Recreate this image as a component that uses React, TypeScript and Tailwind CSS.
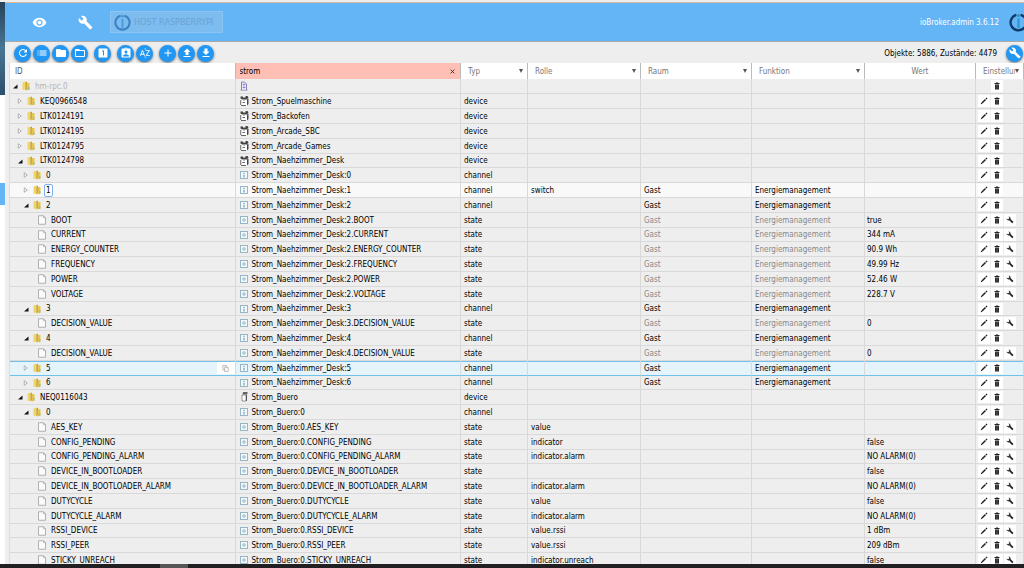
import type { ReactNode } from "react";
import {
  MdAdd,
  MdAssignmentInd,
  MdBuild,
  MdFileDownload,
  MdFileUpload,
  MdFolder,
  MdFolderOpen,
  MdList,
  MdLooksOne,
  MdRefresh,
  MdSortByAlpha,
  MdVisibility,
} from "react-icons/md";

type Kind = "instance" | "device" | "socket" | "channel" | "state";

type Row = {
  id: string;
  level: number;
  kind: Kind;
  name?: string;
  open?: boolean;
  role?: string;
  room?: string;
  func?: string;
  value?: string;
  focused?: boolean;
  selected?: boolean;
};

const desk = "Strom_Naehzimmer_Desk";
const buero = "Strom_Buero";

const channel = (id: string, name: string, extra: Partial<Row> = {}): Row => ({
  id,
  level: 2,
  kind: "channel",
  name: `${name}:${id}`,
  ...extra,
});

const state = (id: string, parent: string, extra: Partial<Row> = {}): Row => ({
  id,
  level: 3,
  kind: "state",
  name: `${parent}.${id}`,
  ...extra,
});

const energy = { room: "Gast", func: "Energiemanagement" };

const rows: Row[] = [
  { id: "hm-rpc.0", level: 0, kind: "instance", open: true },
  { id: "KEQ0966548", level: 1, kind: "device", name: "Strom_Spuelmaschine" },
  { id: "LTK0124191", level: 1, kind: "device", name: "Strom_Backofen" },
  { id: "LTK0124195", level: 1, kind: "device", name: "Strom_Arcade_SBC" },
  { id: "LTK0124795", level: 1, kind: "device", name: "Strom_Arcade_Games" },
  { id: "LTK0124798", level: 1, kind: "device", name: desk, open: true },
  channel("0", desk),
  channel("1", desk, { ...energy, role: "switch", focused: true }),
  channel("2", desk, { ...energy, open: true }),
  state("BOOT", `${desk}:2`, { ...energy, value: "true" }),
  state("CURRENT", `${desk}:2`, { ...energy, value: "344 mA" }),
  state("ENERGY_COUNTER", `${desk}:2`, { ...energy, value: "90.9 Wh" }),
  state("FREQUENCY", `${desk}:2`, { ...energy, value: "49.99 Hz" }),
  state("POWER", `${desk}:2`, { ...energy, value: "52.46 W" }),
  state("VOLTAGE", `${desk}:2`, { ...energy, value: "228.7 V" }),
  channel("3", desk, { ...energy, open: true }),
  state("DECISION_VALUE", `${desk}:3`, { ...energy, value: "0" }),
  channel("4", desk, { ...energy, open: true }),
  state("DECISION_VALUE", `${desk}:4`, { ...energy, value: "0" }),
  channel("5", desk, { ...energy, selected: true }),
  channel("6", desk, energy),
  { id: "NEQ0116043", level: 1, kind: "socket", name: buero, open: true },
  channel("0", buero, { open: true }),
  state("AES_KEY", `${buero}:0`, { role: "value" }),
  state("CONFIG_PENDING", `${buero}:0`, { role: "indicator", value: "false" }),
  state("CONFIG_PENDING_ALARM", `${buero}:0`, { role: "indicator.alarm", value: "NO ALARM(0)" }),
  state("DEVICE_IN_BOOTLOADER", `${buero}:0`, { value: "false" }),
  state("DEVICE_IN_BOOTLOADER_ALARM", `${buero}:0`, { role: "indicator.alarm", value: "NO ALARM(0)" }),
  state("DUTYCYCLE", `${buero}:0`, { role: "value", value: "false" }),
  state("DUTYCYCLE_ALARM", `${buero}:0`, { role: "indicator.alarm", value: "NO ALARM(0)" }),
  state("RSSI_DEVICE", `${buero}:0`, { role: "value.rssi", value: "1 dBm" }),
  state("RSSI_PEER", `${buero}:0`, { role: "value.rssi", value: "209 dBm" }),
  state("STICKY_UNREACH", `${buero}:0`, { role: "indicator.unreach", value: "false" }),
];

const indents = ["pl-[2px]", "pl-[7px]", "pl-[13px]", "pl-[18px]"];

const toolGroups = [
  [
    { label: "Aktualisieren", Icon: MdRefresh },
    { label: "Liste", Icon: MdList },
    { label: "Alle zuklappen", Icon: MdFolder },
    { label: "Alle aufklappen", Icon: MdFolderOpen },
  ],
  [{ label: "Ebene 1", Icon: MdLooksOne }],
  [
    { label: "Expertenmodus", Icon: MdAssignmentInd },
    { label: "Sortieren", Icon: MdSortByAlpha },
  ],
  [
    { label: "Neues Objekt", Icon: MdAdd },
    { label: "Hochladen", Icon: MdFileUpload },
    { label: "Herunterladen", Icon: MdFileDownload },
  ],
];

function Logo({ className, ring, mark }: { className: string; ring: string; mark: string }) {
  return (
    <svg viewBox="0 0 36 36" className={className} fill="none" aria-hidden="true">
      <path d="M14 3.500a15 15 0 1 0 8 0" stroke={ring} strokeWidth="4.500" />
      <path d="M18 10v19" stroke={mark} strokeWidth="4.500" />
      <circle cx="18" cy="4.500" r="3" fill={mark} />
    </svg>
  );
}

function Expander({ open }: { open?: boolean }) {
  return (
    <svg viewBox="0 0 12 12" className="size-[6px]">
      {open ? (
        <path d="M11 3v8H2z" fill="#111" />
      ) : (
        <path d="M2.500 1.500v9l6-4.500z" fill="#fff" stroke="#999" strokeWidth="1.500" />
      )}
    </svg>
  );
}

function FolderIcon() {
  return (
    <svg viewBox="0 0 16 20" className="h-[10px] w-[8px] shrink-0" aria-hidden="true">
      <path d="M1 3l6-2v16l-6 1z" fill="#f0d566" />
      <path d="M7 3l3-2v15l-3 3z" fill="#b8901c" />
      <path d="M9 4h6v13l-6 2z" fill="#e6c54c" />
      <path d="M12 12h3v5l-3 1z" fill="#a3bd94" />
    </svg>
  );
}

function FileIcon() {
  return (
    <svg viewBox="0 0 16 20" className="h-[10px] w-[8px] shrink-0" aria-hidden="true">
      <path d="M1 1.500h10l4 4v13H1z" fill="#fbfbfb" stroke="#9a9a9a" strokeWidth="1.500" />
      <path d="M11 1.500v4h4" fill="none" stroke="#9a9a9a" strokeWidth="1.200" />
    </svg>
  );
}

function KindIcon({ kind }: { kind: Kind }) {
  if (kind === "instance") {
    return (
      <svg viewBox="0 0 16 20" className="h-[10px] w-[8px] shrink-0" fill="none" aria-hidden="true">
        <path d="M3 18V2h6l4 4v12" fill="#eeeefc" stroke="#5a50a0" strokeWidth="1.400" />
        <path d="M5 7h6M5 13h6M8 5v10M1 18.500h14" stroke="#7a72b4" strokeWidth="1.300" />
      </svg>
    );
  }
  if (kind === "device") {
    return (
      <svg viewBox="0 0 18 20" className="h-[10px] w-[9px] shrink-0" aria-hidden="true">
        <path d="M1 3l11-2 5 2v13l-4 4H1z" fill="#fff" />
        <path d="M1 1h5v2h5V0h4l2 3-3 4H4L1 5z" fill="#444" />
        <path d="M14 7l3-2v11l-3 3z" fill="#444" />
        <path d="M1.500 8v10M5 13h5M2 19h10" stroke="#555" strokeWidth="1.800" />
        <path d="M6 9h4" stroke="#aaa" strokeWidth="1.500" />
      </svg>
    );
  }
  if (kind === "socket") {
    return (
      <svg viewBox="0 0 18 20" className="h-[10px] w-[9px] shrink-0" aria-hidden="true">
        <path d="M4 6h8v12H4z" fill="#fff" stroke="#777" strokeWidth="1.500" />
        <path d="M6 0h9v4l-3 1H5z" fill="#666" />
        <path d="M13 5v13" stroke="#555" strokeWidth="2" />
      </svg>
    );
  }
  return (
    <svg viewBox="0 0 16 16" className="size-[8px] shrink-0" fill="none" aria-hidden="true">
      <rect x="1" y="1" width="14" height="14" fill="#f3f8fa" stroke="#8eb0bf" strokeWidth="1.800" />
      {kind === "channel" ? (
        <path d="M8 3.500v3M8 8v5" stroke="#5f8ea3" strokeWidth="2" />
      ) : (
        <circle cx="8" cy="8" r="2.500" stroke="#7fa6b7" strokeWidth="1.600" />
      )}
    </svg>
  );
}

function IconButton({ label, children }: { label: string; children: ReactNode }) {
  return (
    <button aria-label={label} className="flex h-[12px] w-[12px] items-center justify-center bg-white">
      <svg viewBox="0 0 16 16" className="size-[8px]" aria-hidden="true">
        {children}
      </svg>
    </button>
  );
}

function RoundButton({ label, children }: { label: string; children: ReactNode }) {
  return (
    <button
      aria-label={label}
      className="flex size-[17px] items-center justify-center rounded-full bg-[#2196f3] text-[12px] text-white shadow-sm shadow-black/40"
    >
      {children}
    </button>
  );
}

function FilterSelect({ label }: { label: string }) {
  return (
    <div className="relative">
      <select
        aria-label={label}
        className="block h-[16px] w-full appearance-none overflow-hidden bg-transparent pt-px pr-[8px] pl-[7px] leading-[15px] text-[#777] outline-none"
      >
        <option>{label}</option>
      </select>
      <svg viewBox="0 0 8 8" className="pointer-events-none absolute top-[6px] right-[4px] size-[4px]">
        <path d="M0 0h8L4 8z" fill="#555" />
      </svg>
    </div>
  );
}

function ObjectRow({ row }: { row: Row }) {
  const isState = row.kind === "state";
  const tone = row.selected
    ? "bg-[#e5f3fb] shadow-[inset_0_1px_#70c0e7] [&>td]:border-b-[#70c0e7]!"
    : row.focused
      ? "bg-[#f9f9f9]"
      : "bg-[#eee]";
  const muted = isState ? "text-[#888]" : "";

  return (
    <tr className={`h-[15px] nth-[5n+6]:h-[14px] ${tone}`}>
      <td>
        <div className={`flex items-center ${indents[row.level]}`}>
          <span className="mr-[4px] flex w-[6px] shrink-0">
            {!isState && (
              <button aria-label={`${row.id} ${row.open ? "zuklappen" : "aufklappen"}`}>
                <Expander open={row.open} />
              </button>
            )}
          </span>
          {isState ? <FileIcon /> : <FolderIcon />}
          <span
            className={`ml-[3px] px-[2px] ${row.kind === "instance" ? "text-[#b5b5b5]" : ""} ${
              row.focused ? "rounded-xs bg-white outline -outline-offset-1 outline-[#7eb0f5]" : ""
            }`}
          >
            {row.id}
          </span>
          {row.selected && (
            <button aria-label="ID kopieren" className="ml-auto flex h-[12px] w-[18px] items-center justify-center bg-white">
              <svg viewBox="0 0 16 16" className="size-[7px]" fill="#fff" stroke="#999" strokeWidth="1.500">
                <path d="M2 1h8v10H2z" />
                <path d="M6 5h8v10H6z" />
              </svg>
            </button>
          )}
        </div>
      </td>
      <td>
        <div className="flex items-center pl-[4px]">
          <span className="flex w-[12px] shrink-0">
            <KindIcon kind={row.kind} />
          </span>
          <span>{row.name}</span>
        </div>
      </td>
      <td className="pl-[3px]">
        {row.kind === "instance" ? "" : row.kind === "socket" ? "device" : row.kind}
      </td>
      <td className="pl-[3px]">{row.role}</td>
      <td className={`pl-[3px] ${muted}`}>{row.room}</td>
      <td className={`pl-[3px] ${muted}`}>{row.func}</td>
      <td className="pl-[2px]">{row.value}</td>
      <td>
        <div className="flex gap-px pl-[2px]">
          {row.kind === "instance" ? (
            <span className="w-[12px]" />
          ) : (
            <IconButton label="Bearbeiten">
              <path d="M1.500 14.500l1-3.500 2.500 2.500z" fill="#222" />
              <path d="M4 12l7-7M12 4l2-2" stroke="#222" strokeWidth="3" />
            </IconButton>
          )}
          <IconButton label="Löschen">
            <path d="M3 2h3V1h4v1h3v2H3zM4 5h8v10H4z" fill="#222" />
            <path d="M6.500 6v8M9.500 6v8" stroke="#777" />
          </IconButton>
          {isState && (
            <IconButton label="Einstellungen">
              <path d="M5 1a4 4 0 0 1 4 5l6 6-2.500 2.500-6-6A4 4 0 0 1 1 5l3 2 3-3z" fill="#222" />
            </IconButton>
          )}
        </div>
      </td>
    </tr>
  );
}

export default function App() {
  return (
    <div className="flex h-screen flex-col overflow-hidden bg-white font-['DejaVu_Sans_Condensed','Noto_Sans',sans-serif] text-[8px] leading-[13px] text-black">
      <div className="flex min-h-0 flex-1">
        {/* window behind the browser */}
        <div className="flex w-[5px] shrink-0 flex-col">
          <div className="h-[2px] bg-[#eee]" />
          <div className="h-[93px] bg-linear-to-b from-[#27435a] via-[#487795] to-[#2c4f6b]" />
          <div className="mt-[88px] h-[22px] bg-[#64b5f6]" />
        </div>

        <div className="flex min-w-0 flex-1 flex-col overflow-hidden bg-[#eee] pt-[2px]">
          <header className="flex h-[40px] shrink-0 items-center border-y border-t-[#d9b8a0] border-b-[#a9a9a9] bg-[#64b5f6] text-white">
            <button aria-label="Sichtbarkeit" className="ml-[27px] text-[15px]">
              <MdVisibility />
            </button>
            <button aria-label="Werkzeuge" className="ml-[31px] text-[15px]">
              <MdBuild />
            </button>
            <button className="ml-[17px] flex h-[22px] items-center gap-[3px] border border-[#8cc5f3] bg-[#7cbcef] px-[3px] pr-[8px] text-[9px] text-[#6ba3d3]">
              <Logo className="size-[17px]" ring="#3c83c2" mark="#4a9ee0" />
              HOST RASPBERRYPI
            </button>
            <span className="ml-auto">ioBroker.admin 3.6.12</span>
            <Logo className="mr-[-4px] ml-[10px] size-[19px] shrink-0" ring="#123a66" mark="#3399cc" />
          </header>

          <div className="flex h-[21px] shrink-0 items-center pt-px pl-[9px]">
            <div className="flex gap-[6px]">
              {toolGroups.map((group, i) => (
                <div key={i} className="flex gap-[2px]">
                  {group.map(({ label, Icon }) => (
                    <RoundButton key={label} label={label}>
                      <Icon />
                    </RoundButton>
                  ))}
                </div>
              ))}
            </div>
            <span className="mr-[9px] ml-auto">Objekte: 5886, Zustände: 4479</span>
            <RoundButton label="Einstellungen">
              <MdBuild />
            </RoundButton>
            <span className="w-[1px]" />
          </div>

          <div className="min-h-0 flex-1 overflow-hidden pl-[4px]">
            <table className="w-full table-fixed border-separate border-spacing-0 border-l border-[#ddd] [&_td]:overflow-hidden [&_td]:border-r [&_td]:border-b [&_td]:border-[#d9d9d9] [&_td]:py-0 [&_td]:whitespace-nowrap">
              <colgroup>
                <col />
                <col />
                <col className="w-[67px]" />
                <col className="w-[113px]" />
                <col className="w-[111px]" />
                <col className="w-[113px]" />
                <col className="w-[111px]" />
                <col className="w-[48px]" />
              </colgroup>
              <thead>
                <tr className="h-[16px] bg-white text-left text-[#777] [&>th]:border-r [&>th]:border-[#bbb] [&>th]:p-0 [&>th]:font-normal">
                  <th>
                    <input
                      aria-label="ID"
                      placeholder="ID"
                      className="block h-[16px] w-full pl-[5px] outline-none placeholder:text-[#555]"
                    />
                  </th>
                  <th>
                    <div className="flex h-[16px] items-center bg-[#ffbfb5] pr-[5px] text-black">
                      <input
                        aria-label="Name"
                        defaultValue="strom"
                        className="h-[16px] min-w-0 flex-1 pl-[4px] outline-none"
                      />
                      <button aria-label="Filter löschen">
                        <svg viewBox="0 0 8 8" className="size-[5px]" stroke="#333" strokeWidth="1.500">
                          <path d="M1 1l6 6M7 1L1 7" />
                        </svg>
                      </button>
                    </div>
                  </th>
                  <th>
                    <FilterSelect label="Typ" />
                  </th>
                  <th>
                    <FilterSelect label="Rolle" />
                  </th>
                  <th>
                    <FilterSelect label="Raum" />
                  </th>
                  <th>
                    <FilterSelect label="Funktion" />
                  </th>
                  <th className="text-center">Wert</th>
                  <th>
                    <FilterSelect label="Einstellungen" />
                  </th>
                </tr>
              </thead>
              <tbody>
                {rows.map((row, i) => (
                  <ObjectRow key={i} row={row} />
                ))}
              </tbody>
            </table>
          </div>
        </div>
      </div>

      <footer className="flex h-[4px] shrink-0 bg-[#221f22]">
        <span className="ml-[160px] w-[28px] bg-[#555]" />
      </footer>
    </div>
  );
}
